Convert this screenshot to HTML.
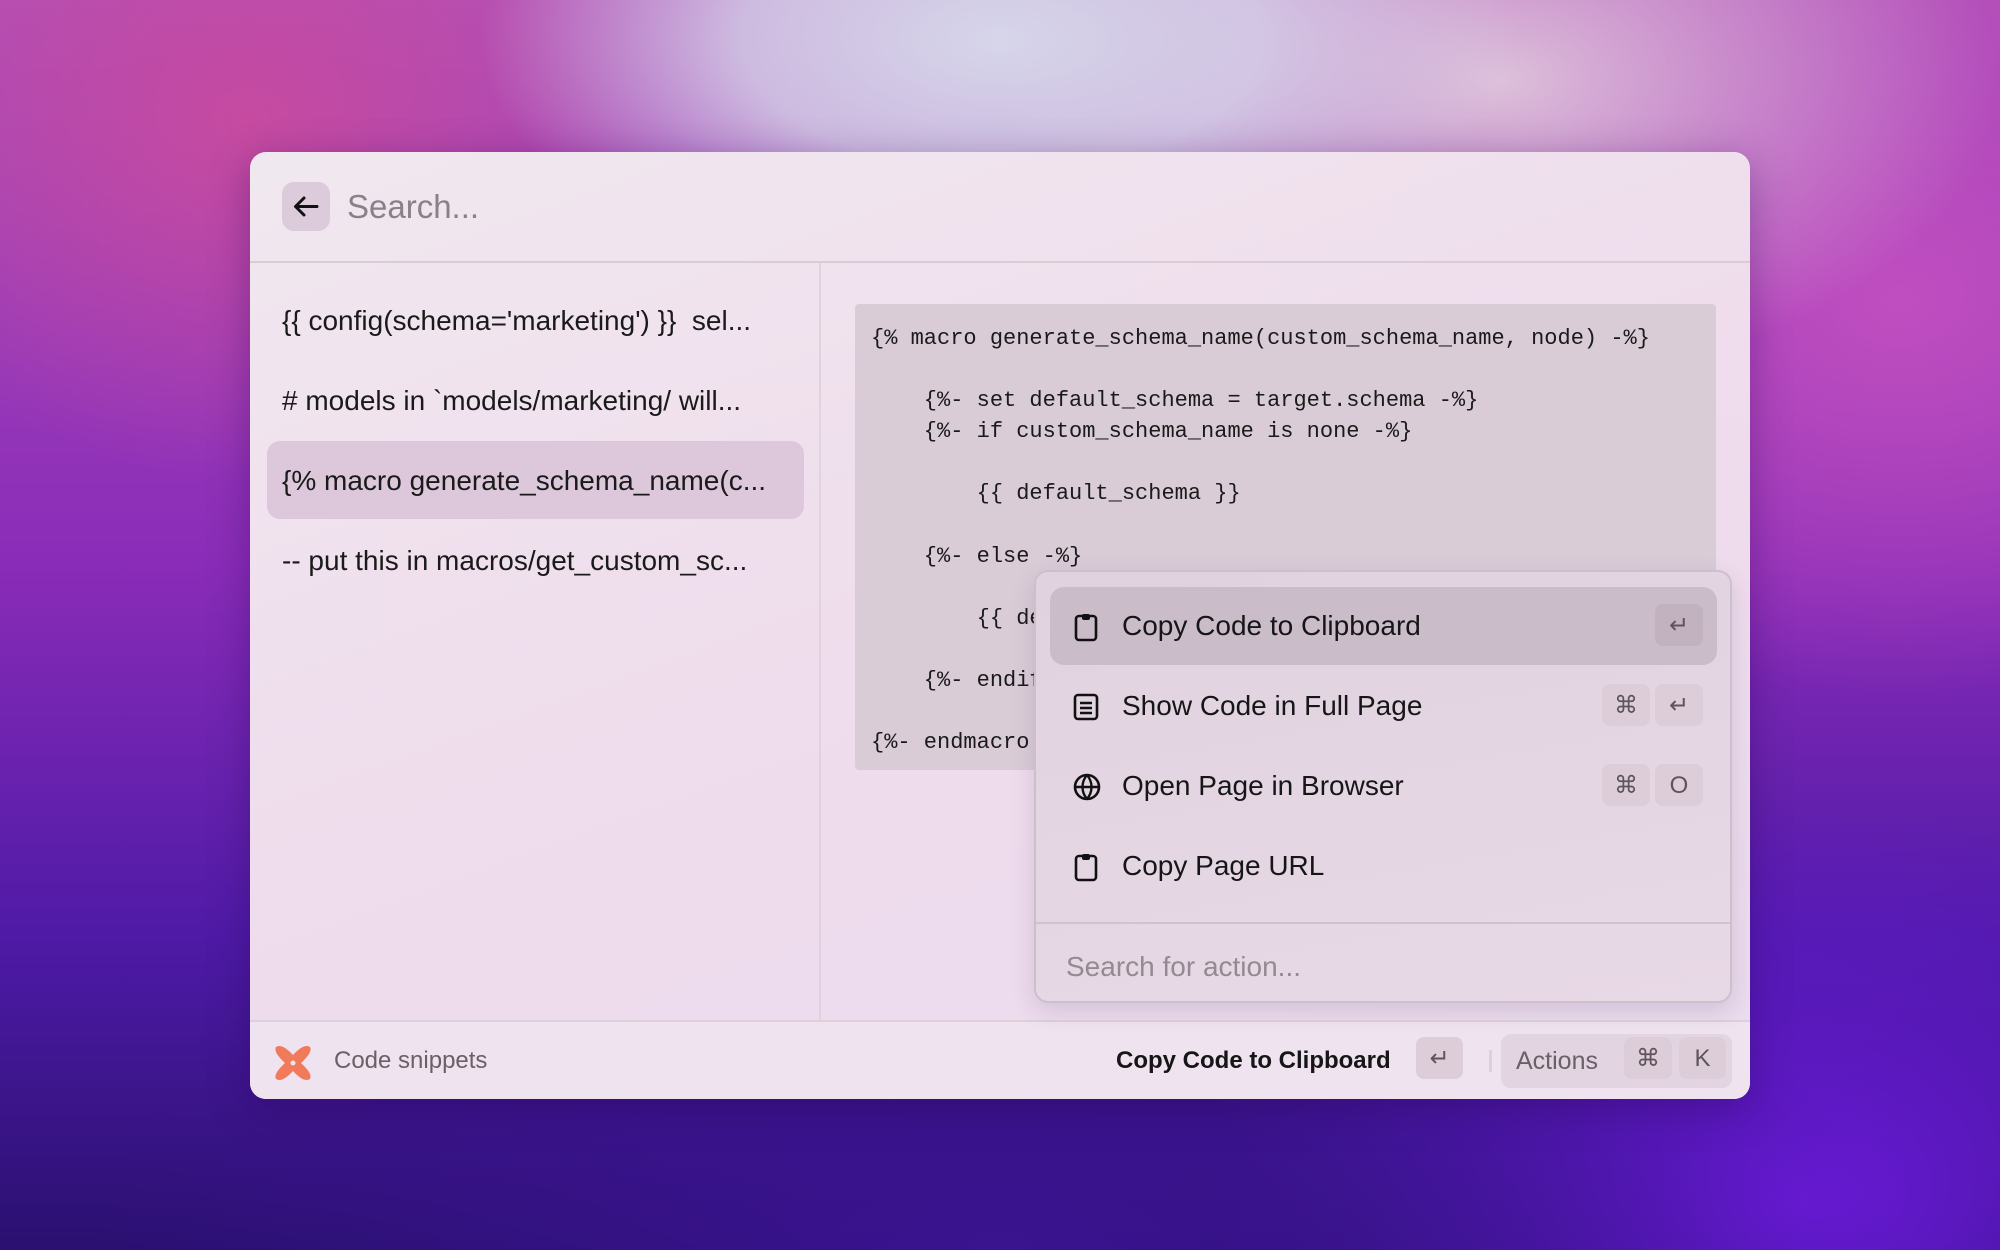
<!DOCTYPE html>
<html><head><meta charset="utf-8"><style>
*{box-sizing:border-box;margin:0;padding:0}
html,body{width:2000px;height:1250px;overflow:hidden}
body{position:relative;font-family:"Liberation Sans",sans-serif;
background:
radial-gradient(ellipse 520px 260px at 1000px 40px,#d6d6ea 0%,rgba(214,214,234,0.8) 50%,rgba(214,214,234,0) 100%),
radial-gradient(ellipse 500px 300px at 1500px 80px,#ddc0da 0%,rgba(221,192,218,0) 100%),
radial-gradient(ellipse 420px 360px at 250px 120px,#c64aa0 0%,rgba(198,74,160,0) 100%),
radial-gradient(ellipse 500px 400px at 1900px 300px,#c04ec0 0%,rgba(192,78,192,0) 100%),
radial-gradient(ellipse 900px 400px at 1000px 1250px,#3a1390 0%,rgba(58,19,144,0) 100%),
radial-gradient(ellipse 600px 400px at 1800px 1200px,#6a1ad8 0%,rgba(106,26,216,0) 100%),
linear-gradient(180deg,#b050b8 0%,#8a2cb8 45%,#4e1aa6 75%,#2a1070 100%);}
.win{position:absolute;left:250px;top:152px;width:1500px;height:947px;border-radius:16px;overflow:hidden;
background:linear-gradient(160deg,#f0e8ef 0%,#efdcec 50%,#eadcee 100%);box-shadow:0 10px 40px rgba(40,0,80,0.35)}
.hdr{position:absolute;left:0;top:0;width:1500px;height:111px;border-bottom:2px solid #d9ccd8}
.back{position:absolute;left:32px;top:30px;width:48px;height:49px;border-radius:12px;background:#dccbda}
.search{position:absolute;left:97px;top:35px;font-size:33px;color:#8b8088;line-height:40px}
.vdiv{position:absolute;left:569px;top:111px;width:2px;height:757px;background:#e0d2df}
.item{position:absolute;left:32px;font-size:28px;color:#1a1a1a;line-height:34px}
.sel{position:absolute;left:17px;top:289px;width:537px;height:78px;border-radius:13px;background:#dcc8da}
.code{position:absolute;left:605px;top:152px;width:861px;height:466px;border-radius:4px;background:#d9ccd7}
.code pre{position:absolute;left:16px;top:19px;font-family:"Liberation Mono",monospace;font-size:22px;line-height:31.1px;color:#1a1a1a}
.ftr{position:absolute;left:0;top:868px;width:1500px;height:79px;border-top:2px solid #ddd0dc;background:#efe3ef}
.ftr .t{position:absolute;top:23px;font-size:24px;line-height:32px}
.kc{position:absolute;height:42px;border-radius:8px;background:#dccdd9;color:#5e555b;font-size:24px;text-align:center;line-height:44px}
.pop{position:absolute;left:1034px;top:570px;width:698px;height:433px;border-radius:14px;border:2px solid #cdbfcc;
background:linear-gradient(170deg,#e0d2de 0%,#e8d9e6 100%);box-shadow:0 8px 24px rgba(80,40,90,0.15)}
.pi{position:absolute;left:14px;width:667px;height:78px;border-radius:14px}
.pi .ic{position:absolute;left:22px;top:25px}
.pi .l{position:absolute;left:72px;top:22px;font-size:28px;color:#161616;line-height:34px}
</style></head><body>
<div class="win">
 <div class="hdr">
  <div class="back"><svg width="48" height="49" viewBox="0 0 48 49"><path d="M35 24.5H14M22 16l-8.5 8.5L22 33" stroke="#111" stroke-width="3" fill="none" stroke-linecap="round" stroke-linejoin="round"/></svg></div>
  <div class="search">Search...</div>
 </div>
 <div class="vdiv"></div>
 <div class="sel"></div>
 <div class="item" style="top:152px">{{ config(schema='marketing') }}&nbsp; sel...</div>
 <div class="item" style="top:232px"># models in `models/marketing/ will...</div>
 <div class="item" style="top:312px">{% macro generate_schema_name(c...</div>
 <div class="item" style="top:392px">-- put this in macros/get_custom_sc...</div>
 <div class="code"><pre>{% macro generate_schema_name(custom_schema_name, node) -%}

    {%- set default_schema = target.schema -%}
    {%- if custom_schema_name is none -%}

        {{ default_schema }}

    {%- else -%}

        {{ default_schema }}_{{ custom_schema_name | trim }}

    {%- endif -%}

{%- endmacro %}</pre></div>
 <div class="ftr">
  <svg style="position:absolute;left:22px;top:20px" width="42" height="42" viewBox="0 0 42 42"><path d="M4 5 Q10 1 21 13 Q32 1 38 5 Q41 10 29 21 Q41 32 38 37 Q32 41 21 29 Q10 41 4 37 Q1 32 13 21 Q1 10 4 5Z" fill="#f07a5a"/><circle cx="21" cy="21" r="2.5" fill="#efe3ef"/></svg>
  <div class="t" style="left:84px;color:#6a6068">Code snippets</div>
  <div class="t" style="left:866px;color:#161616;font-weight:bold">Copy Code to Clipboard</div>
  <div class="kc" style="left:1166px;top:15px;width:47px">↵</div>
  <div style="position:absolute;left:1239px;top:28px;width:3px;height:22px;background:#ddd0dc"></div>
  <div style="position:absolute;left:1251px;top:12px;width:231px;height:54px;border-radius:10px;background:#e2d4e0"></div>
  <div class="t" style="left:1266px;color:#6a6068;font-size:25px">Actions</div>
  <div class="kc" style="left:1374px;top:15px;width:48px">⌘</div>
  <div class="kc" style="left:1429px;top:15px;width:47px">K</div>
 </div>
</div>
<div class="pop">
 <div class="pi" style="top:15px;background:#cbbcca">
  <svg class="ic" width="28" height="30" viewBox="0 0 28 30"><rect x="4" y="4" width="20" height="24" rx="3" stroke="#111" stroke-width="2.6" fill="none"/><rect x="10" y="2" width="8" height="6" rx="2" fill="#111"/></svg>
  <div class="l">Copy Code to Clipboard</div>
  <div class="kc" style="left:605px;top:17px;width:48px;background:#c2b2c0">↵</div>
 </div>
 <div class="pi" style="top:95px">
  <svg class="ic" width="28" height="30" viewBox="0 0 28 30"><rect x="3" y="3" width="22" height="24" rx="3" stroke="#111" stroke-width="2.6" fill="none"/><path d="M8 11h12M8 16h12M8 21h12" stroke="#111" stroke-width="2.6"/></svg>
  <div class="l">Show Code in Full Page</div>
  <div class="kc" style="left:552px;top:17px;width:48px">⌘</div>
  <div class="kc" style="left:605px;top:17px;width:48px">↵</div>
 </div>
 <div class="pi" style="top:175px">
  <svg class="ic" width="30" height="30" viewBox="0 0 30 30"><circle cx="15" cy="15" r="12" stroke="#111" stroke-width="2.6" fill="none"/><path d="M3 15h24M15 3c-6 7-6 17 0 24M15 3c6 7 6 17 0 24" stroke="#111" stroke-width="2.4" fill="none"/></svg>
  <div class="l">Open Page in Browser</div>
  <div class="kc" style="left:552px;top:17px;width:48px">⌘</div>
  <div class="kc" style="left:605px;top:17px;width:48px">O</div>
 </div>
 <div class="pi" style="top:255px">
  <svg class="ic" width="28" height="30" viewBox="0 0 28 30"><rect x="4" y="4" width="20" height="24" rx="3" stroke="#111" stroke-width="2.6" fill="none"/><rect x="10" y="2" width="8" height="6" rx="2" fill="#111"/></svg>
  <div class="l">Copy Page URL</div>
 </div>
 <div style="position:absolute;left:0;top:350px;width:694px;height:2px;background:#d0c2ce"></div>
 <div style="position:absolute;left:30px;top:378px;font-size:28px;color:#948a92;line-height:34px">Search for action...</div>
</div>
</body></html>
